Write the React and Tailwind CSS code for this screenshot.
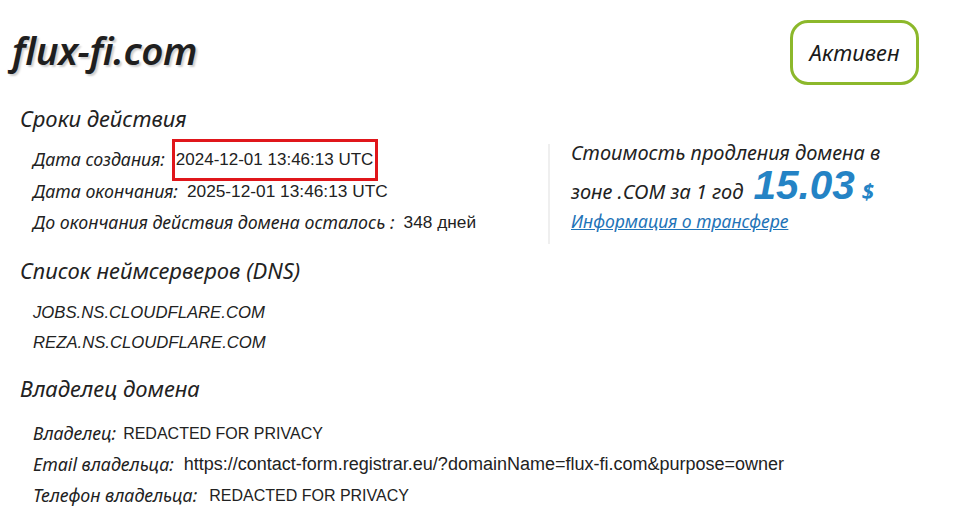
export default function App() {
  const label = "italic text-[17.8px] text-[#222]";
  const val = "text-[#222] font-['Liberation_Sans',sans-serif]";
  return (
    <div className="w-[961px] h-[520px] bg-white overflow-hidden font-['Noto_Sans',sans-serif] text-[#222]">
      <div className="flex items-start justify-between pl-[12px] pr-[42px] pt-[20px]">
        <div className="italic font-semibold text-[38.5px] leading-[44px] pt-[8px] text-[#1f1f1f] [text-shadow:2px_2px_2px_#cfcfcf] tracking-[-0.4px]">
          flux-fi.com
        </div>
        <div className="w-[129px] h-[65px] rounded-[18px] border-[3px] border-[#8cb82b] flex items-center justify-center italic text-[22px] text-[#1a1a1a]">
          Активен
        </div>
      </div>

      <div className="pl-[20px] mt-[19px] italic text-[22px] leading-[28px]">Сроки действия</div>

      <div className="flex mt-[12px] h-[100px]">
        <div className="w-[548px] pl-[33px] flex flex-col">
          <div className="flex items-center h-[31px]">
            <span className={label}>Дата создания:</span>
            <span className="ml-[7px] border-[3px] border-[#e0161b] h-[42px] w-[206px] flex items-center pl-[1px] shrink-0">
              <span className={"text-[17px] " + val}>2024-12-01 13:46:13 UTC</span>
            </span>
          </div>
          <div className="flex items-center h-[31px] mt-[1px]">
            <span className={label}>Дата окончания:</span>
            <span className={"ml-[9px] text-[17.3px] " + val}>2025-12-01 13:46:13 UTC</span>
          </div>
          <div className="flex items-center h-[31px]">
            <span className={label}>До окончания действия домена осталось :</span>
            <span className={"ml-[9px] text-[17.3px] " + val}>348 дней</span>
          </div>
        </div>
        <div className="w-[2px] h-full bg-[#efefef]"></div>
        <div className="pl-[21px]">
          <div className="italic text-[20px] leading-[22px] -mt-[2px]">Стоимость продления домена в</div>
          <div className="flex items-baseline h-[36px] leading-[36px] mt-[3px]">
            <span className="italic text-[20px]">зоне .COM за 1 год</span>
            <span className="ml-[10px] italic font-bold text-[40.5px] leading-[36px] text-[#2483c5] font-['Liberation_Sans',sans-serif]">15.03</span>
            <span className="ml-[7px] italic font-bold text-[22px] text-[#2483c5]">$</span>
          </div>
          <div className="italic text-[17.6px] leading-[24px] text-[#1f74b8] underline mt-[6px]">Информация о трансфере</div>
        </div>
      </div>

      <div className="pl-[20px] mt-[12px] italic text-[22px] leading-[28px]">Список неймсерверов (DNS)</div>
      <div className="pl-[33px] mt-[14px] flex flex-col">
        <div className="h-[30px] flex items-center italic text-[16.7px] font-['Liberation_Sans',sans-serif]">JOBS.NS.CLOUDFLARE.COM</div>
        <div className="h-[30px] flex items-center italic text-[16.7px] font-['Liberation_Sans',sans-serif]">REZA.NS.CLOUDFLARE.COM</div>
      </div>

      <div className="pl-[20px] mt-[16px] italic text-[22px] leading-[28px]">Владелец домена</div>
      <div className="pl-[33px] mt-[16px] flex flex-col">
        <div className="h-[31px] flex items-center">
          <span className={label}>Владелец:</span>
          <span className={"ml-[7px] text-[16px] " + val}>REDACTED FOR PRIVACY</span>
        </div>
        <div className="h-[31px] flex items-center">
          <span className={label}>Email владельца:</span>
          <span className={"ml-[10px] text-[18px] " + val}>https://contact-form.registrar.eu/?domainName=flux-fi.com&amp;purpose=owner</span>
        </div>
        <div className="h-[31px] flex items-center">
          <span className={label}>Телефон владельца:</span>
          <span className={"ml-[12px] text-[16px] " + val}>REDACTED FOR PRIVACY</span>
        </div>
      </div>
    </div>
  );
}
